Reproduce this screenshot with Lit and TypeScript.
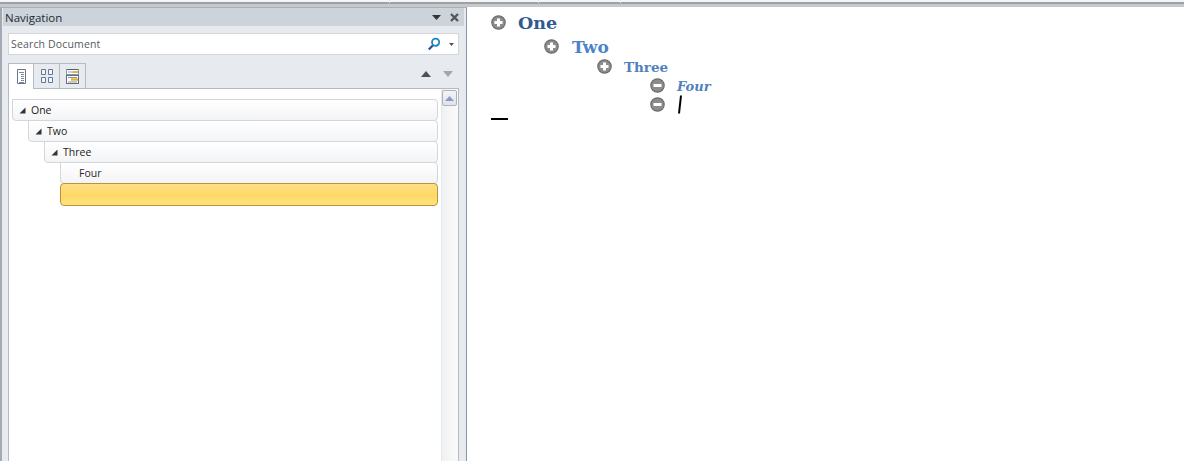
import { LitElement, html, css, svg } from "lit";
import { customElement } from "lit/decorators.js";

const plus = svg`<svg class="bullet" viewBox="0 0 15 15" width="15" height="15"><circle cx="7.5" cy="7.5" r="6.7" fill="#8c8c8c" stroke="#6e6e6e" stroke-width="1.2"/><path d="M3.5 7.5h8M7.5 3.5v8" stroke="#fff" stroke-width="3"/></svg>`;
const minus = svg`<svg class="bullet" viewBox="0 0 15 15" width="15" height="15"><circle cx="7.5" cy="7.5" r="6.7" fill="#8c8c8c" stroke="#6e6e6e" stroke-width="1.2"/><path d="M3.5 7.5h8" stroke="#fff" stroke-width="3"/></svg>`;
const corner = svg`<svg class="tw" viewBox="0 0 7 7" width="7" height="7"><path d="M6.5 0.5V6.5H0.5Z" fill="#333"/></svg>`;

@customElement("app-root")
export class AppRoot extends LitElement {
  static styles = css`
    :host { display: block; height: 461px; overflow: hidden; background: #fff; font-family: "Open Sans", sans-serif; }
    .top { height: 7px; display: flex; background: linear-gradient(#f4f5f6 0 2px, #9ea1a4 2px 4px, #c6c9cc 4px 7px); }
    .tick { width: 1px; background: #e8e8e8; height: 3px; }
    .t1 { margin-left: 389px; } .t2 { margin-left: 148px; } .t3 { margin-left: 81px; }
    .main { display: flex; height: 454px; }
    .nav { width: 467px; box-sizing: border-box; background: #e7eaef; border-left: 2px solid #a4a9b1; border-right: 1px solid #8c96a3; border-top: 1px solid #a9afb7; padding: 0 2px 0 1px; display: flex; flex-direction: column; }
    .title { height: 18px; flex: none; background: #cdd3db; display: flex; align-items: center; padding: 0 5px 0 2px; font-size: 11.5px; color: #232a35; }
    .title span { flex: 1; }
    .title svg { display: block; }
    .title .cl { margin-left: 9px; }
    .body { flex: 1; display: flex; flex-direction: column; padding: 7px 5px 0 5px; min-height: 0; }
    .search { height: 22px; box-sizing: border-box; flex: none; background: #fff; border: 1px solid #d3d6da; display: flex; align-items: center; padding: 0 4px 0 2px; font-size: 10.5px; color: #555a60; letter-spacing: 0.15px; }
    .search span { flex: 1; }
    .search svg { display: block; }
    .search .dd { margin-left: 8px; }
    .tabs { flex: none; display: flex; align-items: flex-start; margin-top: 8px; height: 25px; position: relative; }
    .tab { width: 26px; height: 25px; box-sizing: border-box; border: 1px solid #b6bbc1; border-left: none; border-bottom: none; display: flex; align-items: center; justify-content: center; }
    .tab:first-child { border-left: 1px solid #b6bbc1; background: #fff; position: relative; z-index: 1; height: 26px; padding-bottom: 1px; }
    .arrows { margin-left: auto; display: flex; gap: 12px; padding: 8px 6px 0 0; }
    .arrows svg { display: block; }
    .tree { flex: 1; box-sizing: border-box; background: #fff; border: 1px solid #b6bbc1; border-bottom: none; display: flex; min-height: 0; }
    .rows { flex: 1; padding: 10px 3px 0 3px; display: flex; flex-direction: column; }
    .row { height: 22px; flex: none; box-sizing: border-box; margin-bottom: -1px; border: 1px solid #d4d6d9; border-radius: 0 4px 4px 4px; background: linear-gradient(#fff, #f3f4f6); display: flex; align-items: center; font-size: 10.5px; color: #222; }
    .row .tw { margin: 0 5px 0 6px; display: block; }
    .row .lbl.noarrow { margin-left: 18px; color: #331f2c; }
    .l0 { margin-left: 0; } .l1 { margin-left: 16px; } .l2 { margin-left: 32px; } .l3 { margin-left: 48px; }
    .row.sel { height: 23px; border: 1px solid #c1913a; border-radius: 4px; background: linear-gradient(#fedf85, #ffd966 55%, #ffe27f); }
    .scroll { width: 17px; box-sizing: border-box; flex: none; background: linear-gradient(90deg, #f0f1f3, #fafafa); border-left: 1px solid #e4e6e9; display: flex; flex-direction: column; }
    .sbtn { height: 16px; box-sizing: border-box; margin: 1px 1px 0 0; border: 1px solid #aeb3ba; border-radius: 2px; background: linear-gradient(#f4f5f8, #dfe3ea); display: flex; align-items: center; justify-content: center; }
    .doc { flex: 1; padding: 3px 0 0 24px; font-family: "DejaVu Serif", serif; font-weight: bold; }
    .h { display: flex; align-items: center; }
    .h .bullet { flex: none; display: block; }
    .h .txt { margin-left: 12px; }
    .h1 { height: 25px; font-size: 17.5px; color: #2f5b92; }
    .h2 { height: 22px; margin-left: 53px; font-size: 17px; color: #4a84c6; }
    .h2 .txt { margin-left: 13px; margin-top: 2px; }
    .h3 { height: 19px; margin-left: 106px; font-size: 13.5px; color: #4f81bd; }
    .h4 { height: 19px; margin-left: 159px; font-size: 13px; font-style: italic; color: #4f81bd; }
    .h4 .txt { margin-top: 2px; }
    .h5 { height: 19px; margin-left: 159px; }
    .caret { display: block; margin-left: 12px; }
    .end { width: 17px; height: 2px; background: #000; margin-top: 4px; }
  `;

  render() {
    return html`
      <div class="top"><i class="tick t1"></i><i class="tick t2"></i><i class="tick t3"></i></div>
      <div class="main">
        <aside class="nav">
          <div class="title">
            <span>Navigation</span>
            <svg width="9" height="5" viewBox="0 0 9 5"><path d="M0 0h9L4.500 5Z" fill="#333"/></svg>
            <svg class="cl" width="9" height="9" viewBox="0 0 9 9"><path d="M1 1l7 7M8 1l-7 7" stroke="#555" stroke-width="2.300"/></svg>
          </div>
          <div class="body">
            <div class="search">
              <span>Search Document</span>
              <svg width="14" height="14" viewBox="0 0 14 14"><path d="M6 8.200L1.800 12.600" stroke="#2b4f94" stroke-width="2.200"/><circle cx="8.600" cy="5.200" r="3.600" fill="#fff" stroke="#1c85c8" stroke-width="1.800"/></svg>
              <svg class="dd" width="5" height="3" viewBox="0 0 5 3"><path d="M0 0h5L2.500 3Z" fill="#555"/></svg>
            </div>
            <div class="tabs">
              <div class="tab"><svg width="9" height="15" viewBox="0 0 9 15"><path d="M.5.500h8v14h-8z" fill="#fff" stroke="#66768c"/><path d="M2 3h5M4 5h3M4 7h3M4 9h3M4 11h3M2 13h5" stroke="#7f8b9b" stroke-width="1" shape-rendering="crispEdges"/></svg></div>
              <div class="tab"><svg width="12" height="14" viewBox="0 0 12 14"><path d="M.5.500h4v5h-4zM7.500.500h4v5h-4zM.5 8.500h4v5h-4zM7.500 8.500h4v5h-4z" fill="#f3f5f8" stroke="#5f7a99"/></svg></div>
              <div class="tab"><svg width="13" height="15" viewBox="0 0 13 15"><rect x=".5" y=".5" width="12" height="5" fill="#fff" stroke="#8b97a6"/><path d="M1 .5h11" stroke="#4d5f75"/><rect x=".5" y="6.500" width="12" height="8" fill="#fff" stroke="#5f7086"/><path d="M2 3h5" stroke="#8fa0b4"/><path d="M7 3h5" stroke="#eeb030" stroke-width="2"/><path d="M5 10.500h7" stroke="#eeb030" stroke-width="2.500"/><path d="M2 13h9M2 8.500h9" stroke="#8b97a6"/></svg></div>
              <div class="arrows">
                <svg width="10" height="6" viewBox="0 0 10 6"><path d="M0 6h10L5 0Z" fill="#4c5158"/></svg>
                <svg width="10" height="6" viewBox="0 0 10 6"><path d="M0 0h10L5 6Z" fill="#a5a7aa"/></svg>
              </div>
            </div>
            <div class="tree">
              <div class="rows">
                <div class="row l0">${corner}<span class="lbl">One</span></div>
                <div class="row l1">${corner}<span class="lbl">Two</span></div>
                <div class="row l2">${corner}<span class="lbl">Three</span></div>
                <div class="row l3"><span class="lbl noarrow">Four</span></div>
                <div class="row l3 sel"></div>
              </div>
              <div class="scroll">
                <div class="sbtn"><svg width="9" height="5" viewBox="0 0 9 5"><path d="M0 5h9L4.500 0Z" fill="#8d9bc4"/></svg></div>
              </div>
            </div>
          </div>
        </aside>
        <main class="doc">
          <div class="h h1">${plus}<span class="txt">One</span></div>
          <div class="h h2">${plus}<span class="txt">Two</span></div>
          <div class="h h3">${plus}<span class="txt">Three</span></div>
          <div class="h h4">${minus}<span class="txt">Four</span></div>
          <div class="h h5">${minus}<svg class="caret" width="5" height="19" viewBox="0 0 5 19"><path d="M4 .5L2 18.500" stroke="#000" stroke-width="2"/></svg></div>
          <div class="end"></div>
        </main>
      </div>
    `;
  }
}
